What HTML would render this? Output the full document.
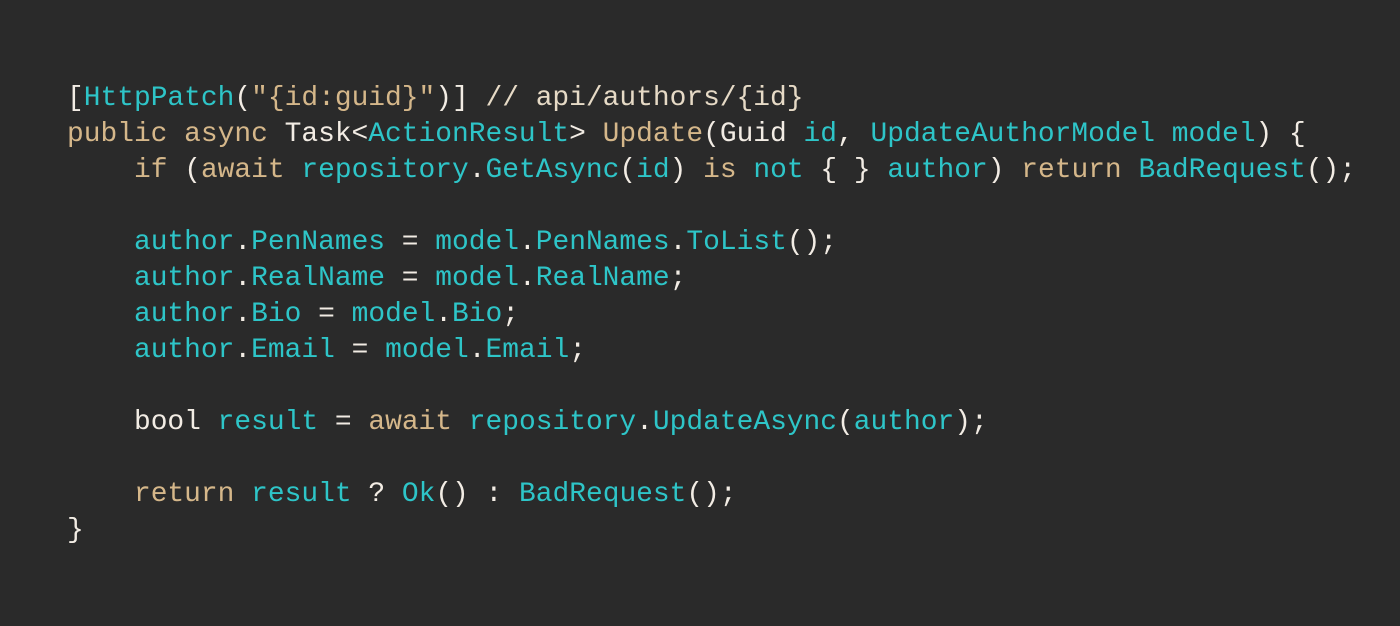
<!DOCTYPE html>
<html><head><style>
html,body{margin:0;padding:0;background:#2a2a2a;width:1400px;height:626px;overflow:hidden}
pre{position:absolute;left:67px;top:81px;margin:0;font-family:"Liberation Mono",monospace;font-size:27.9px;line-height:36px;color:#ece4da}
.c{color:#2ec5c8}.k{color:#d5b78a}.w{color:#f2ece4}.m{color:#e6dac6}
</style></head><body>
<pre><span class="w">[</span><span class="c">HttpPatch</span><span class="w">(</span><span class="k">"{id:guid}"</span><span class="w">)]</span> <span class="m">// api/authors/{id}</span>
<span class="k">public async</span> <span class="w">Task&lt;</span><span class="c">ActionResult</span><span class="w">&gt;</span> <span class="k">Update</span><span class="w">(Guid</span> <span class="c">id</span><span class="w">,</span> <span class="c">UpdateAuthorModel model</span><span class="w">) {</span>
    <span class="k">if</span> <span class="w">(</span><span class="k">await</span> <span class="c">repository</span><span class="w">.</span><span class="c">GetAsync</span><span class="w">(</span><span class="c">id</span><span class="w">)</span> <span class="k">is</span> <span class="c">not</span> <span class="w">{ }</span> <span class="c">author</span><span class="w">)</span> <span class="k">return</span> <span class="c">BadRequest</span><span class="w">();</span>

    <span class="c">author</span><span class="w">.</span><span class="c">PenNames</span> <span class="w">=</span> <span class="c">model</span><span class="w">.</span><span class="c">PenNames</span><span class="w">.</span><span class="c">ToList</span><span class="w">();</span>
    <span class="c">author</span><span class="w">.</span><span class="c">RealName</span> <span class="w">=</span> <span class="c">model</span><span class="w">.</span><span class="c">RealName</span><span class="w">;</span>
    <span class="c">author</span><span class="w">.</span><span class="c">Bio</span> <span class="w">=</span> <span class="c">model</span><span class="w">.</span><span class="c">Bio</span><span class="w">;</span>
    <span class="c">author</span><span class="w">.</span><span class="c">Email</span> <span class="w">=</span> <span class="c">model</span><span class="w">.</span><span class="c">Email</span><span class="w">;</span>

    <span class="w">bool</span> <span class="c">result</span> <span class="w">=</span> <span class="k">await</span> <span class="c">repository</span><span class="w">.</span><span class="c">UpdateAsync</span><span class="w">(</span><span class="c">author</span><span class="w">);</span>

    <span class="k">return</span> <span class="c">result</span> <span class="w">?</span> <span class="c">Ok</span><span class="w">() :</span> <span class="c">BadRequest</span><span class="w">();</span>
<span class="w">}</span></pre>
</body></html>
